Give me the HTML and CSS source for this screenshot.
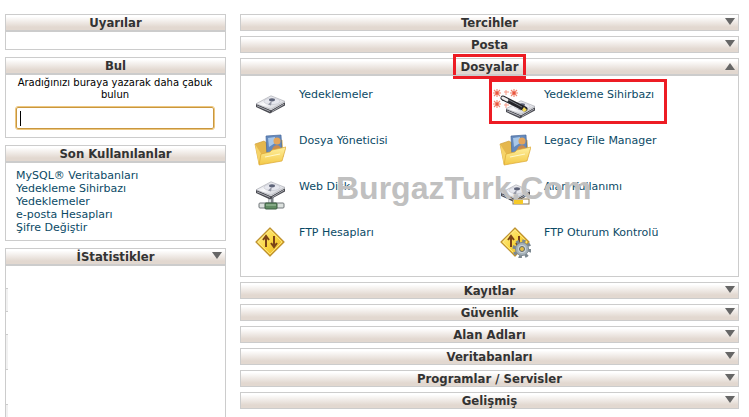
FILE: index.html
```html
<!DOCTYPE html>
<html lang="tr">
<head>
  <meta charset="UTF-8">
  <meta name="viewport" content="width=device-width, initial-scale=1.0">
  <title>Dosyalar</title>
  <link rel="stylesheet" href="styles.css">
</head>
<body>
  <!-- shared icon shapes -->
  <svg class="defs" aria-hidden="true">
    <defs>
      <linearGradient id="metal" x1="0" y1="0" x2="1" y2="1">
        <stop offset="0" stop-color="#c8cad2"/>
        <stop offset=".45" stop-color="#fbfbfd"/>
        <stop offset="1" stop-color="#b6b8c1"/>
      </linearGradient>
      <linearGradient id="gold" x1="0" y1="0" x2="0" y2="1">
        <stop offset="0" stop-color="#fff0a0"/>
        <stop offset="1" stop-color="#f3c845"/>
      </linearGradient>
      <linearGradient id="sign" x1="0" y1="0" x2="1" y2="1">
        <stop offset="0" stop-color="#fff3a0"/>
        <stop offset=".5" stop-color="#fad743"/>
        <stop offset="1" stop-color="#e8ab18"/>
      </linearGradient>
      <g id="disk" transform="scale(1 .8)">
        <path d="M1 11v4l14 8 15-10V9L16 19z" fill="#4a4b52"/>
        <path d="M1 11 16 1l14 7-14 10z" fill="url(#metal)" stroke="#a2a4ac" stroke-width=".7"/>
        <path d="M2 13l13 7v1L2 14zM17 20l12-9v1l-12 9z" fill="#c6c7ce"/>
        <ellipse cx="17" cy="8" rx="8" ry="4" fill="#e6e7ee" stroke="#bcbec8" stroke-width=".6"/>
        <ellipse cx="17" cy="6" rx="3" ry="2" fill="#5d6378"/>
        <path d="M17 7l-4 5 3 1z" fill="#9598a6"/>
      </g>
      <g id="folder">
        <path d="M1 10l9-3 3 2 15-3 1 17-24 7z" fill="#e5b74c" stroke="#c99a33" stroke-width=".6"/>
        <path d="M12 2l15-1 1 18-15 3z" fill="#6489bd" stroke="#48699b" stroke-width=".7"/>
        <path d="M14 4l7-1v6l-6 4z" fill="#a9c7e8"/>
        <circle cx="23" cy="7" r="3.500" fill="#e4a55a"/>
        <path d="M18 17c0-7 9-8 9-1z" fill="#c98a4d"/>
        <path d="M1 10l4 21 3-10z" fill="#f6d368"/>
        <path d="M7 20l9-2 2-2 14-3-4 14-23 4z" fill="url(#gold)" stroke="#dba632" stroke-width=".7"/>
        <path d="M11 23l15-3" stroke="#fff7c8" stroke-width="1.200"/>
      </g>
      <g id="traffic">
        <path d="M16 2 30 16 16 30 2 16z" fill="url(#sign)" stroke="#bd9131" stroke-width="1.200" stroke-linejoin="round"/>
        <path d="M16 4 28 16 16 28 4 16z" fill="none" stroke="#ffeb87" stroke-width=".8"/>
        <path d="M12 21V11M9 14l3-4 3 4" fill="none" stroke="#7b4317" stroke-width="2"/>
        <path d="M20 10v10M17 17l3 4 3-4" fill="none" stroke="#7b4317" stroke-width="2"/>
      </g>
      <g id="spark" stroke="#f08570" stroke-width="1.100">
        <path d="M0-4V4M-4 0H4M-3-3 3 3M3-3-3 3"/>
        <circle r="1.500" fill="#ea5540" stroke="none"/>
      </g>
    </defs>
  </svg>

  <div class="layout">
    <aside class="sidebar">
      <section class="panel">
        <h2 class="bar">Uyarılar</h2>
        <div class="panel-body notices"></div>
      </section>

      <section class="panel">
        <h2 class="bar">Bul</h2>
        <form class="panel-body find">
          <label for="quickFind">Aradığınızı buraya yazarak daha çabuk bulun</label>
          <input type="text" id="quickFind" name="find">
        </form>
      </section>

      <section class="panel">
        <h2 class="bar">Son Kullanılanlar</h2>
        <ul class="panel-body recent">
          <li><a href="#">MySQL® Veritabanları</a></li>
          <li><a href="#">Yedekleme Sihirbazı</a></li>
          <li><a href="#">Yedeklemeler</a></li>
          <li><a href="#">e-posta Hesapları</a></li>
          <li><a href="#">Şifre Değiştir</a></li>
        </ul>
      </section>

      <section class="panel stats">
        <h2 class="bar"><button type="button">İStatistikler</button></h2>
        <div class="panel-body stats-body">
          <div class="stat odd"></div>
          <div class="stat"></div>
          <div class="stat odd tall"></div>
          <div class="stat tall"></div>
          <div class="stat odd last"></div>
        </div>
      </section>
    </aside>

    <main class="groups">
      <h2 class="bar"><button type="button">Tercihler</button></h2>
      <h2 class="bar"><button type="button">Posta</button></h2>

      <section class="panel">
        <h2 class="bar open"><button type="button"><span class="marked">Dosyalar</span></button></h2>
        <div class="panel-body icons">
          <a href="#" class="item">
            <svg viewBox="0 0 32 32"><use href="#disk" x="1" y="7"/></svg>
            <span>Yedeklemeler</span>
          </a>
          <a href="#" class="item boxed">
            <svg class="wizard" viewBox="0 0 44 32">
              <use href="#disk" x="14" y="12"/>
              <use href="#spark" x="6" y="5"/>
              <use href="#spark" x="23" y="5"/>
              <use href="#spark" x="6" y="16"/>
              <path d="M15 2v5M13 4h5M15 15v5M13 17h5" stroke="#f59a86"/>
              <path d="M12 10 34 21" stroke="#25252a" stroke-width="5" stroke-linecap="round"/>
              <path d="M12 10l4 2" stroke="#eee" stroke-width="3" stroke-linecap="round"/>
              <path d="M18 12l13 7" stroke="#777b82" stroke-width="1"/>
              <path d="M33 19l3 3-3 2-2-2z" fill="#f4d957"/>
            </svg>
            <span>Yedekleme Sihirbazı</span>
          </a>
          <a href="#" class="item">
            <svg viewBox="0 0 32 32"><use href="#folder"/></svg>
            <span>Dosya Yöneticisi</span>
          </a>
          <a href="#" class="item">
            <svg viewBox="0 0 32 32"><use href="#folder"/></svg>
            <span>Legacy File Manager</span>
          </a>
          <a href="#" class="item">
            <svg viewBox="0 0 32 32">
              <path d="M17 17v8" stroke="#80858b" stroke-width="5"/>
              <path d="M16 17v8" stroke="#dde1e4" stroke-width="2"/>
              <use href="#disk" x="1" y="1"/>
              <rect x="5" y="23" width="25" height="5" rx="1" fill="#dce1de" stroke="#71777a"/>
              <rect x="11" y="23" width="12" height="6" rx="1" fill="#608b62" stroke="#3b5d40"/>
              <path d="M12 25h10" stroke="#a9c7a9"/>
            </svg>
            <span>Web Disk</span>
          </a>
          <a href="#" class="item">
            <svg viewBox="0 0 32 32">
              <use href="#disk" x="1" y="4"/>
              <rect x="14" y="19" width="16" height="5" fill="#fff" stroke="#8b7950"/>
              <rect x="15" y="20" width="9" height="4" fill="#f5c928"/>
            </svg>
            <span>Alan Kullanımı</span>
          </a>
          <a href="#" class="item">
            <svg viewBox="0 0 32 32"><use href="#traffic"/></svg>
            <span>FTP Hesapları</span>
          </a>
          <a href="#" class="item">
            <svg viewBox="0 0 32 32">
              <use href="#traffic"/>
              <circle cx="23" cy="23" r="8" fill="none" stroke="#7c8890" stroke-width="3" stroke-dasharray="3.200 3.083"/>
              <circle cx="23" cy="23" r="6.500" fill="#a6b2ba" stroke="#7c8890"/>
              <circle cx="23" cy="23" r="4" fill="#ccd4d8"/>
              <circle cx="23" cy="23" r="2.500" fill="#e2bd48" stroke="#60696f"/>
            </svg>
            <span>FTP Oturum Kontrolü</span>
          </a>
          <div class="watermark">BurgazTurk.Com</div>
        </div>
      </section>

      <h2 class="bar"><button type="button">Kayıtlar</button></h2>
      <h2 class="bar"><button type="button">Güvenlik</button></h2>
      <h2 class="bar"><button type="button">Alan Adları</button></h2>
      <h2 class="bar"><button type="button">Veritabanları</button></h2>
      <h2 class="bar"><button type="button">Programlar / Servisler</button></h2>
      <h2 class="bar"><button type="button">Gelişmiş</button></h2>
    </main>
  </div>
</body>
</html>
```

FILE: styles.css
```css
*,
*::after {
  box-sizing: border-box;
}

body {
  margin: 0;
  background: #fff;
  color: #000;
  font-family: Verdana, "DejaVu Sans", sans-serif;
  font-size: 11px;
  line-height: 13px;
}

a {
  color: #0b4a66;
  text-decoration: none;
}

.defs {
  position: absolute;
  width: 0;
  height: 0;
}

.layout {
  display: flex;
  gap: 14px;
  min-height: 100vh;
  padding: 14px 10px 0 5px;
}

.sidebar {
  display: flex;
  flex-direction: column;
  gap: 7px;
  flex: 0 0 221px;
}

.groups {
  display: flex;
  flex-direction: column;
  gap: 5px;
  flex: 1;
  min-width: 0;
}

.bar {
  position: relative;
  margin: 0;
  border: 1px solid #ccc;
  background: linear-gradient(#fff 10%, #e2d8d0 80%);
  color: #333;
  font-family: Tahoma, "DejaVu Sans Condensed", "DejaVu Sans", sans-serif;
  font-size: 13px;
  font-weight: bold;
  line-height: 15px;
  text-align: center;
}

.bar button {
  display: block;
  width: 100%;
  height: 15px;
  padding: 0;
  border: 0;
  background: none;
  color: inherit;
  font: inherit;
  cursor: pointer;
}

/* toggle arrow */
.bar button::after {
  content: "";
  position: absolute;
  top: 3px;
  right: 3px;
  border: 5px solid transparent;
  border-top: 7px solid #666;
  border-bottom: 0;
}

.bar.open button::after {
  top: 4px;
  border-top: 0;
  border-bottom: 7px solid #666;
}

.panel-body {
  margin: 0;
  border: 1px solid #ccc;
}

.notices {
  height: 19px;
}

.find {
  padding: 2px 11px 8px 10px;
  font-size: 10px;
  line-height: 12px;
  text-align: center;
}

.find label {
  display: block;
  margin-bottom: 6px;
}

.find input {
  display: block;
  width: 100%;
  height: 22px;
  border: 1px solid #c9973f;
  border-radius: 2px;
  outline: 1px solid #edc77f;
  background: linear-gradient(#000, #000) 3px 3px / 1px 15px no-repeat #fff;
  font: inherit;
}

.recent {
  padding: 6px 10px;
  list-style: none;
}

.stats {
  display: flex;
  flex-direction: column;
  flex: 1;
}

.stats-body {
  display: flex;
  flex-direction: column;
  flex: 1;
  padding-top: 22px;
  border-bottom: 0;
}

.stat {
  width: 2px;
  height: 23px;
  border-top: 1px solid #ccc;
}

.stat.odd {
  background: #f1f1f1;
}

.stat.tall {
  height: 35px;
}

.stat.last {
  flex: 1;
  height: auto;
}

.icons {
  position: relative;
  display: grid;
  grid-template-columns: 1fr 1fr;
  grid-auto-rows: 46px;
  padding: 10px 7px 6px 0;
}

.item {
  position: relative;
  display: flex;
  gap: 13px;
  padding-left: 13px;
}

.item svg {
  flex: none;
  width: 32px;
  height: 32px;
  margin-top: 2px;
}

.item .wizard {
  width: 44px;
  margin-left: -8px;
  margin-right: -4px;
}

.item span {
  padding-top: 2px;
}

/* red frames */
.marked::after,
.boxed::after {
  content: "";
  position: absolute;
  border: 3px solid #ed1c24;
}

.marked {
  position: relative;
}

.marked::after {
  inset: -5px -8px;
}

.boxed::after {
  top: -7px;
  left: 3px;
  width: 178px;
  height: 45px;
}

.watermark {
  position: absolute;
  top: 94px;
  left: 95px;
  color: #c0c0c0;
  font-family: Arial, "Liberation Sans", sans-serif;
  font-size: 32px;
  font-weight: bold;
  line-height: 36px;
  pointer-events: none;
}
```
